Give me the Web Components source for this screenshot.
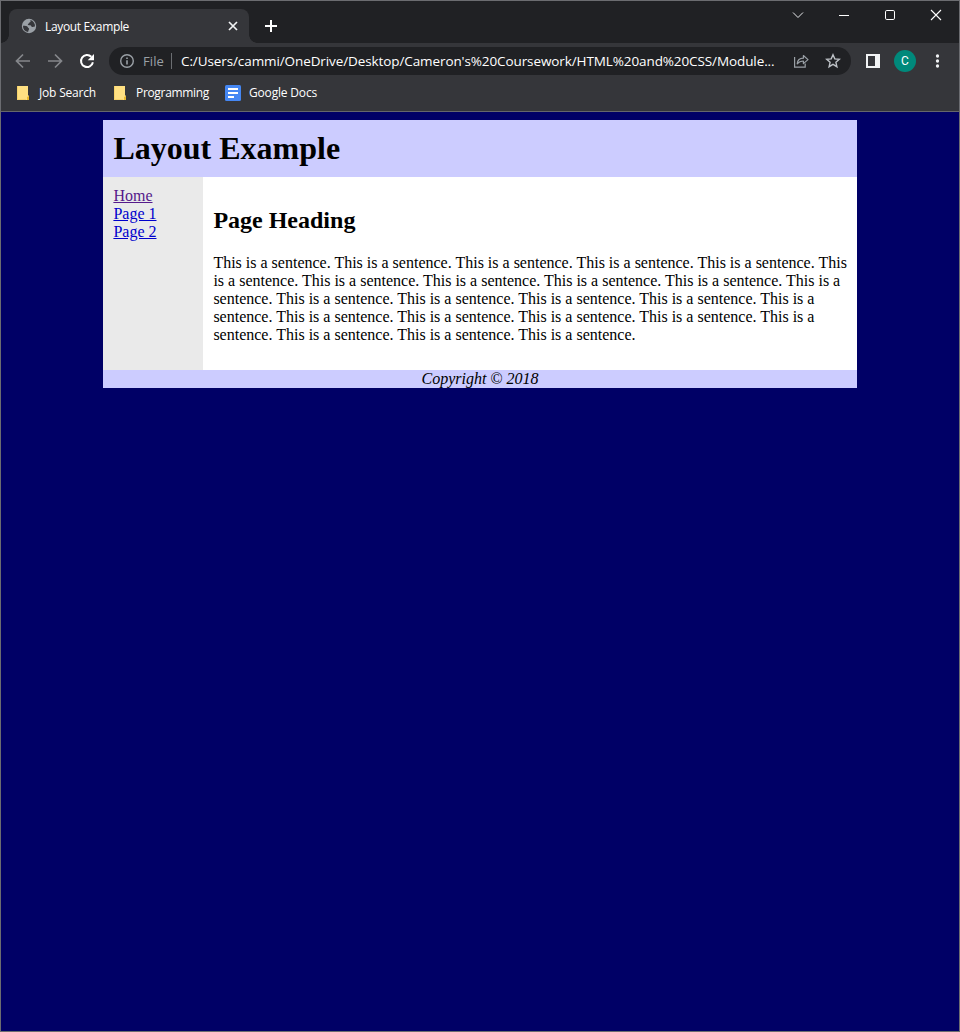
<!DOCTYPE html>
<html lang="en">
<head>
<meta charset="utf-8">
<title>Layout Example</title>
<style>
html,body{margin:0;height:100%;background:#000066}
</style>
</head>
<body>
<browser-window></browser-window>
<script>
const define = (name, html, ready) => {
  const t = document.createElement('template');
  t.innerHTML = html;
  customElements.define(name, class extends HTMLElement {
    connectedCallback() {
      if (this.shadowRoot) return;
      this.attachShadow({mode: 'open'}).append(t.content.cloneNode(true));
      if (ready) ready(this);
    }
  });
};

/* A label whose tracking is adjusted so that it fills the width in its "fit" attribute. */
define('ui-label', `<style>
:host{display:block;white-space:nowrap;flex:none;color:#fff;font:12px/18px "Open Sans","Noto Sans",sans-serif}
span{display:inline-block}
</style><span><slot></slot></span>`, el => {
  const fit = +el.getAttribute('fit');
  if (!fit) return;
  const span = el.shadowRoot.querySelector('span');
  const w = span.getBoundingClientRect().width;
  span.style.letterSpacing = (fit - w) / el.textContent.length + 'px';
  el.style.width = fit + 'px';
});

define('browser-tab', `<style>
:host{position:relative;display:flex;align-items:center;box-sizing:border-box;width:240px;height:34px;padding:0 11px 0 12px;background:#35363a;border-radius:8px 8px 0 0}
:host::before,:host::after{content:"";position:absolute;bottom:0;width:8px;height:8px}
:host::before{left:-8px;background:radial-gradient(circle at 0 0,transparent 7.5px,#35363a 8px)}
:host::after{right:-8px;background:radial-gradient(circle at 100% 0,transparent 7.5px,#35363a 8px)}
svg{flex:none;display:block}
ui-label{margin-left:8px;margin-right:auto;padding-top:1px}
</style>
<svg width="16" height="16" viewBox="0 0 16 16"><circle cx="8" cy="8" r="7.2" fill="#9aa0a6"/><path d="M9.500 2C9 3.200 8.200 3.600 7 4.200 5.800 4.900 6.300 6 5.100 6.300 5 7.300 6.300 7.300 7.600 7.300 8.800 7.500 8.500 9 9.800 9.200 10.600 9.500 9.800 10.700 9 11.200 8.600 12.300 8.400 13.200 7.200 14A6 6 0 0 1 2.200 8.300C3.500 8.600 5 8.600 5.900 9.500 6.300 10.200 5.600 10.900 7.300 11.200" fill="none" stroke="#35363a" stroke-width="0"/><path d="M2 7.800C4 7.900 6.300 7.700 6.800 9.200 7 10.200 8.200 9.800 8.100 11 8 11.800 7.200 12.300 7.100 14A6.100 6.100 0 0 1 2 7.800ZM9.300 2A6.100 6.100 0 0 1 14 8.600C12.800 8.400 12.400 9.300 11.300 9 10 8.700 10.400 7.300 9.200 7.200 8 7.300 6.800 7.300 6.800 6.300 7 5.500 8.200 5.600 8.200 4.700 8.300 4 9.500 4.300 9.600 3.400Z" fill="#35363a"/></svg>
<ui-label fit="84">Layout Example</ui-label>
<svg width="10" height="10" viewBox="0 0 10 10"><path d="M1 1l8 8M9 1l-8 8" stroke="#f1f3f4" stroke-width="1.700"/></svg>`);

define('title-bar', `<style>
:host{display:flex;height:42px;background:#202124;box-sizing:border-box;padding-left:8px}
browser-tab{margin-top:8px}
svg{display:block;flex:none}
.new{margin:19px auto 0 15px}
.controls{display:flex;height:28px;align-items:center}
.controls span{width:46px;display:flex;justify-content:center}
</style>
<browser-tab></browser-tab>
<svg class="new" width="14" height="12" viewBox="0 0 14 12"><path d="M7 0v12M1 6h12" stroke="#fff" stroke-width="2"/></svg>
<div class="controls">
<span><svg width="12" height="12" viewBox="0 0 12 12" fill="none" stroke="#e8eaed"><path d="M1 3.500l5 5 5-5"/></svg></span>
<span><svg width="12" height="12" viewBox="0 0 12 12"><path d="M1 6.500h10" stroke="#fff"/></svg></span>
<span><svg width="12" height="12" viewBox="0 0 12 12"><rect x="1.500" y="1.500" width="9" height="9" rx="1.300" fill="none" stroke="#fff"/></svg></span>
<span><svg width="12" height="12" viewBox="0 0 12 12"><path d="M1 1l10 10M11 1L1 11" stroke="#fff" stroke-width="1.100"/></svg></span>
</div>`);

define('address-bar', `<style>
:host{display:flex;align-items:center;box-sizing:border-box;width:742px;height:28px;padding:0 10px;border-radius:14px;background:#202124}
svg{display:block;flex:none}
.scheme{color:#9aa0a6;margin-left:8px;font-size:13px}
i{width:1px;height:16px;background:#6b6e72;margin:0 9px 0 7px}
.url{margin-right:auto;font-size:13.500px}
.star{margin-left:16px}
</style>
<svg width="16" height="16" viewBox="0 0 16 16"><circle cx="8" cy="8" r="6.300" fill="none" stroke="#9aa0a6" stroke-width="1.400"/><path d="M8 7.200v4.200M8 4.500v1.500" stroke="#9aa0a6" stroke-width="1.600"/></svg>
<ui-label class="scheme" fit="21">File</ui-label><i></i>
<ui-label class="url" fit="593.500">C:/Users/cammi/OneDrive/Desktop/Cameron's%20Coursework/HTML%20and%20CSS/Module...</ui-label>
<svg width="16" height="16" viewBox="0 0 16 16" fill="none" stroke="#9aa0a6" stroke-width="1.200"><path d="M1.600 4v10.200h10.600V10.500"/><path d="M4.200 10.800c.3-3.700 2.300-5.500 6.200-5.600V2.500L15 6.600l-4.600 4V8c-2.700 0-4.500.7-6.200 2.800Z" stroke-linejoin="round"/></svg>
<svg class="star" width="16" height="16" viewBox="0 0 16 16"><path d="M8 1.800l1.800 4.100 4.500.4-3.400 3 1 4.400L8 11.400l-3.900 2.300 1-4.400-3.400-3 4.500-.4Z" fill="none" stroke="#bdc1c6" stroke-width="1.400"/></svg>`);

define('tool-bar', `<style>
:host{display:flex;align-items:center;height:36px;padding-left:14px;background:#35363a}
svg{display:block;flex:none}
.b{margin-right:16px}
.panel{margin-left:14px}
.avatar{width:22px;height:22px;border-radius:50%;background:#00897b;display:grid;place-items:center;margin:0 14px 0 13px}
.avatar ui-label{font:12px/22px Roboto,sans-serif}
address-bar{margin-left:-2px}
</style>
<svg class="b" width="16" height="16" viewBox="0 0 16 16" fill="none" stroke="#85878b" stroke-width="1.700"><path d="M15 8H2M8 1.500L1.500 8 8 14.500"/></svg>
<svg class="b" width="16" height="16" viewBox="0 0 16 16" fill="none" stroke="#85878b" stroke-width="1.700"><path d="M1 8h13M8 1.500L14.500 8 8 14.500"/></svg>
<svg class="b" width="16" height="16" viewBox="0 0 16 16"><path d="M13.900 9.200A6 6 0 1 1 12.300 3.800" fill="none" stroke="#fff" stroke-width="2"/><path d="M15 1v6.300H8.700Z" fill="#fff"/></svg>
<address-bar></address-bar>
<svg class="panel" width="16" height="14" viewBox="0 0 16 14"><path d="M1 0h14v14H1ZM3 2v10h7V2Z" fill="#f1f3f4" fill-rule="evenodd"/></svg>
<div class="avatar"><ui-label>C</ui-label></div>
<svg width="16" height="16" viewBox="0 0 16 16" fill="#f1f3f4"><circle cx="7.500" cy="3" r="1.650"/><circle cx="7.500" cy="8" r="1.650"/><circle cx="7.500" cy="13" r="1.650"/></svg>`);

define('book-mark', `<style>
:host{display:flex;align-items:center}
svg{display:block;flex:none}
:host([kind=docs]) .folder,:host(:not([kind=docs])) .docs{display:none}
ui-label{margin-left:8px;padding-top:1px}
</style>
<svg class="folder" width="16" height="16" viewBox="0 0 16 16"><path d="M2 1h11v9l1 1v4H2Z" fill="#ffe082"/><path d="M2 1h1v14H2ZM2 14h9v1H2Z" fill="#f5d26b"/><path d="M12 15v-3l2-1v4Z" fill="#e9b92f"/></svg>
<svg class="docs" width="16" height="16" viewBox="0 0 16 16"><rect width="16" height="16" rx="1.500" fill="#4587f3"/><path d="M3 4h10M3 8h10M3 12h6" stroke="#fff" stroke-width="2"/></svg>
<ui-label><slot></slot></ui-label>`, el => {
  const n = document.createElement('ui-label');
  n.setAttribute('fit', el.getAttribute('fit'));
  n.textContent = el.textContent;
  el.shadowRoot.querySelector('ui-label').replaceWith(n);
});

define('bookmark-bar', `<style>
:host{display:flex;box-sizing:border-box;height:33px;padding:0 0 5px 14px;background:#35363a;border-bottom:1px solid #65676b}
book-mark{margin-right:16px}
</style>
<book-mark fit="57">Job Search</book-mark>
<book-mark fit="73">Programming</book-mark>
<book-mark kind="docs" fit="68">Google Docs</book-mark>`);

define('page-layout', `<style>
:host{display:block;width:754px;margin:8px auto 0;background:#eaeaea;color:#000;font:16px/18px "Liberation Serif",serif}
header{background:#ccccff;padding:10px 10.400px}
h1{font-size:32px;line-height:37px;margin:0}
.cols{display:grid;grid-template-columns:100px 1fr}
nav{padding:10px 10.400px}
a{display:block;width:max-content;color:#0000cc;text-decoration:underline}
a.seen{color:#551a8b}
main{background:#fff;padding:10px 10px 10px 10.400px}
h2{font-size:24px;line-height:27px;margin:20px 0}
p{margin:0 0 16px}
footer{background:#ccccff;text-align:center;font-style:italic}
</style>
<header><h1>Layout Example</h1></header>
<div class="cols">
<nav><a class="seen">Home</a><a>Page 1</a><a>Page 2</a></nav>
<main><h2>Page Heading</h2><p></p></main>
</div>
<footer>Copyright © 2018</footer>`, el => {
  el.shadowRoot.querySelector('p').textContent = Array(24).fill('This is a sentence.').join(' ');
});

define('browser-window', `<style>
:host{display:block;box-sizing:border-box;width:960px;height:1032px;background:#000066;border:1px solid #6b6c70}
</style>
<title-bar></title-bar><tool-bar></tool-bar><bookmark-bar></bookmark-bar><page-layout></page-layout>`);
</script>
</body>
</html>
